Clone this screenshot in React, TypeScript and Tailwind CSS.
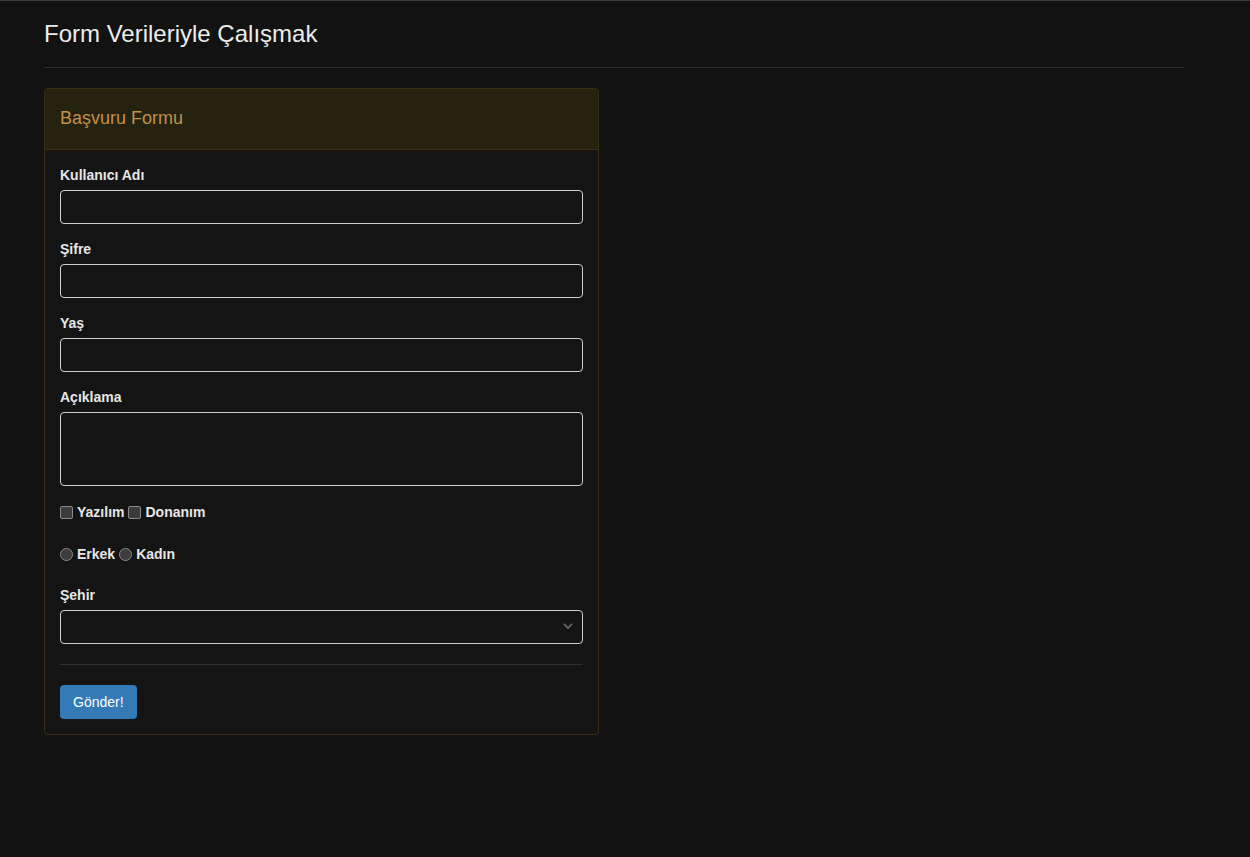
import React from 'react';

const labelCls = 'block text-[14px] leading-5 font-bold text-[#e6e6e6] mb-[5px]';
const inputCls =
  'block w-full h-[34px] rounded-[4px] border border-[#cfcfcf] bg-[#141414] px-3 text-[14px] text-[#e6e6e6] outline-none';

function Field({ label, children }: { label: string; children: React.ReactNode }) {
  return (
    <div className="mb-[15px]">
      <label className={labelCls}>{label}</label>
      {children}
    </div>
  );
}

export default function App() {
  return (
    <div
      className="min-h-[857px] bg-[#121212] border-t border-[#3a3a3a]"
      style={{ fontFamily: '"Liberation Sans", Arial, sans-serif' }}
    >
      <div className="ml-[44px] w-[1140px]">
        {/* başlık */}
        <h3 className="pt-[19px] text-[24px] leading-[27px] text-[#ececec]">Form Verileriyle Çalışmak</h3>
        <hr className="mt-[20px] border-0 border-t border-[#2e2e2e]" />

        {/* panel */}
        <div className="mt-[20px] w-[555px] rounded-[4px] border border-[#3a2e12] bg-[#141414]">
          <div className="h-[61px] flex items-center px-[15px] pb-[2px] bg-[#25220f] border-b border-[#3a2e12] rounded-t-[4px]">
            <span className="text-[18px] text-[#c0914a]">Başvuru Formu</span>
          </div>

          <div className="p-[15px]">
            <Field label="Kullanıcı Adı">
              <input type="text" className={inputCls} />
            </Field>
            <Field label="Şifre">
              <input type="password" className={inputCls} />
            </Field>
            <Field label="Yaş">
              <input type="text" className={inputCls} />
            </Field>
            <div>
              <label className={labelCls}>Açıklama</label>
              <textarea className="block w-full h-[74px] rounded-[4px] border border-[#cfcfcf] bg-[#141414] px-3 py-1.5 text-[14px] text-[#e6e6e6] outline-none resize-none" />
            </div>

            {/* checkbox */}
            <div className="mt-[16px] h-5 flex items-center text-[14px] font-bold text-[#e6e6e6]">
              <span className="w-[13px] h-[13px] rounded-[2px] border border-[#8a8a8a] bg-[#3b3b3b] mr-[4px]" />
              <span className="mr-[4px]">Yazılım</span>
              <span className="w-[13px] h-[13px] rounded-[2px] border border-[#8a8a8a] bg-[#3b3b3b] mr-[4px]" />
              <span>Donanım</span>
            </div>

            {/* radio */}
            <div className="mt-[22px] h-5 flex items-center text-[14px] font-bold text-[#e6e6e6]">
              <span className="w-[13px] h-[13px] rounded-full border border-[#8a8a8a] bg-[#3b3b3b] mr-[4px]" />
              <span className="mr-[4px]">Erkek</span>
              <span className="w-[13px] h-[13px] rounded-full border border-[#8a8a8a] bg-[#3b3b3b] mr-[4px]" />
              <span>Kadın</span>
            </div>

            <div className="mt-[21px]">
              <label className={labelCls}>Şehir</label>
              <div className="relative">
                <div className={inputCls} />
                <svg
                  className="absolute right-[10px] top-[13px]"
                  width="10"
                  height="7"
                  viewBox="0 0 10 7"
                  fill="none"
                  stroke="#5a6068"
                  strokeWidth="2"
                >
                  <path d="M1 1l4 4 4-4" />
                </svg>
              </div>
            </div>

            <hr className="mt-[20px] mb-[20px] border-0 border-t border-[#2e2e2e]" />

            <button className="h-[34px] px-[13px] rounded-[4px] bg-[#337ab7] text-white text-[14px]">Gönder!</button>
          </div>
        </div>
      </div>
    </div>
  );
}
